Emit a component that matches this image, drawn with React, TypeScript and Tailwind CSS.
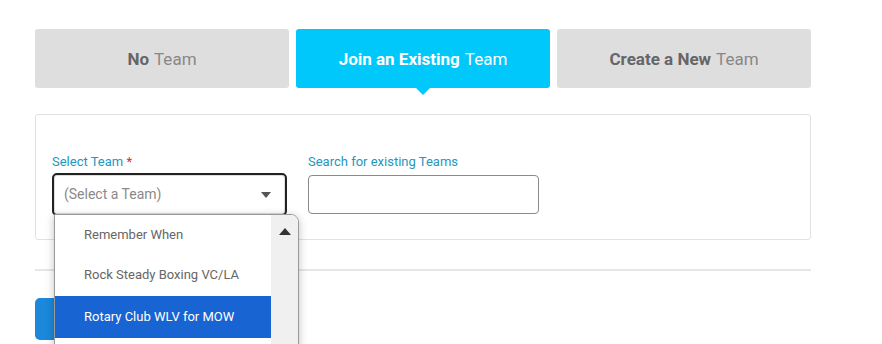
import React from 'react';

const font = { fontFamily: 'Roboto, "Liberation Sans", sans-serif' };

const tabs = [
  { bold: 'No', rest: 'Team', active: false },
  { bold: 'Join an Existing', rest: 'Team', active: true },
  { bold: 'Create a New', rest: 'Team', active: false },
];

const options = [
  { label: 'Remember When', h: 'h-[39px]' },
  { label: 'Rock Steady Boxing VC/LA', h: 'h-[42px]' },
  { label: 'Rotary Club WLV for MOW', h: 'h-[42px]' },
];

export default function App() {
  return (
    <div className="w-[882px] h-[344px] overflow-hidden bg-white" style={font}>
      <div className="ml-[35px] w-[776px] pt-[29px]">
        <div className="flex gap-[7px]">
          {tabs.map((tab) => (
            <div
              key={tab.bold}
              className={`relative flex h-[59px] w-[254px] items-center justify-center rounded-[3px] pt-[2px] text-[17px] ${
                tab.active ? 'bg-[#00c8fb] text-white' : 'bg-[#dedede] text-[#888]'
              }`}
            >
              <span className={`font-bold ${tab.active ? 'text-white' : 'text-[#666]'}`}>{tab.bold}</span>
              <span className="ml-[5px]">{tab.rest}</span>
              {tab.active && (
                <div className="absolute left-1/2 top-full h-0 w-0 -translate-x-1/2 border-x-[7px] border-t-[7px] border-x-transparent border-t-[#00c8fb]" />
              )}
            </div>
          ))}
        </div>

        <div className="relative mt-[26px] h-[126px] rounded-[3px] border border-[#e2e2e2] px-[16px] pt-[38px]">
          <div className="flex gap-[21px]">
            <div className="w-[235px]">
              <div className="mb-[2px] text-[13px] leading-[18px] text-[#2596c0]">
                Select Team <span className="text-[#e0262b]">*</span>
              </div>
              <div className="flex h-[43px] items-center justify-between rounded-[5px] border-2 border-[#222] px-[10px] shadow-[inset_0_0_0_1px_#ddd]">
                <span className="text-[14px] text-[#8a8a8a]">(Select a Team)</span>
                <div className="mr-[4px] h-0 w-0 border-x-[5px] border-t-[6px] border-x-transparent border-t-[#555]" />
              </div>
            </div>
            <div className="w-[231px]">
              <div className="mb-[4px] text-[13px] leading-[18px] text-[#2596c0]">Search for existing Teams</div>
              <div className="h-[39px] rounded-[4px] border border-[#8a8a8a]" />
            </div>
          </div>

          <div className="absolute left-[18px] top-[99px] z-10 flex w-[245px] overflow-hidden rounded-tr-[8px] border border-[#999] bg-white shadow-[0_2px_8px_rgba(0,0,0,0.25)]">
            <div className="w-[216px]">
              {options.map((opt, i) => (
                <div
                  key={opt.label}
                  className={`flex ${opt.h} items-center pl-[29px] text-[13px] ${
                    i === 2 ? 'bg-[#1764d2] text-white' : 'text-[#666]'
                  }`}
                >
                  {opt.label}
                </div>
              ))}
              <div className="h-[20px]" />
            </div>
            <div className="flex-1 bg-[#f0f0f0] pt-[13px]">
              <div className="mx-auto h-0 w-0 border-x-[6px] border-b-[7px] border-x-transparent border-b-[#333]" />
            </div>
          </div>
        </div>

        <div className="mt-[29px] h-[2px] bg-[#e6e6e6]" />

        <div className="mt-[27px] h-[42px] w-[120px] rounded-[5px] bg-[#1b88dc]" />
      </div>
    </div>
  );
}
